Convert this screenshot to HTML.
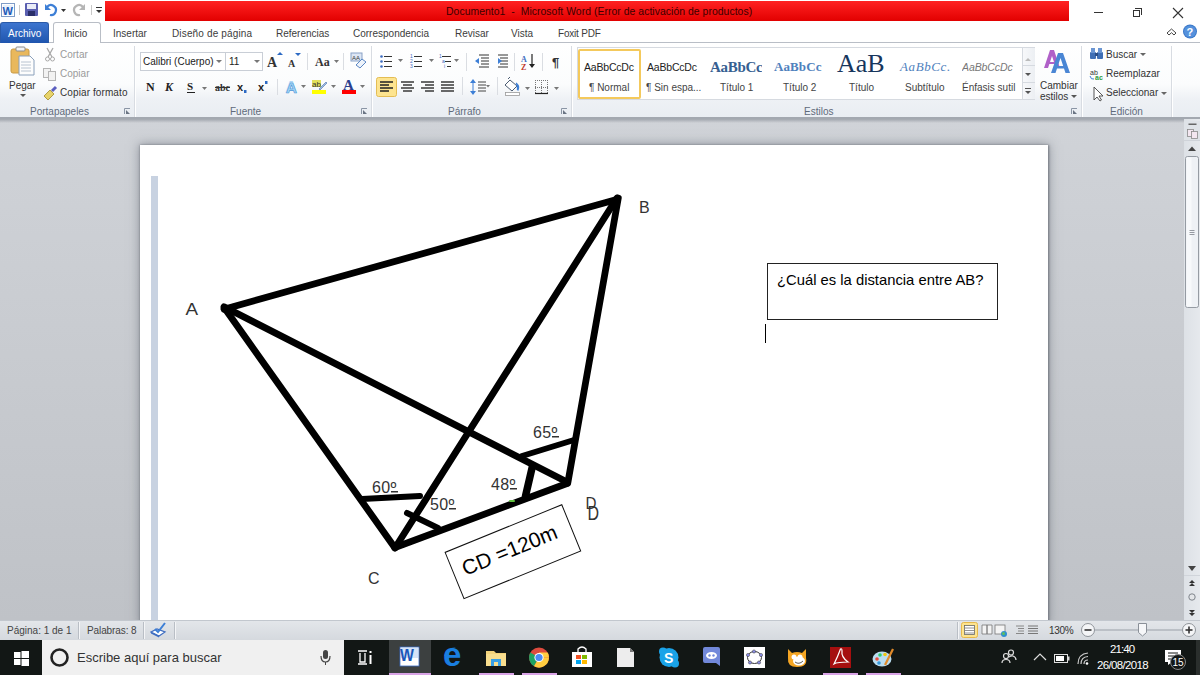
<!DOCTYPE html>
<html><head><meta charset="utf-8">
<style>
*{box-sizing:border-box}
html,body{margin:0;padding:0}
body{width:1200px;height:675px;position:relative;overflow:hidden;font-family:"Liberation Sans",sans-serif;background:#fff;color:#222}
.a{position:absolute}
.t{position:absolute;white-space:nowrap;font-size:11px;line-height:12px;color:#3b3b3b}
.tab{position:absolute;top:28px;font-size:11px;line-height:12px;color:#3c3c3c;white-space:nowrap}
.glab{position:absolute;top:106px;font-size:11px;line-height:12px;color:#5f6a7a;white-space:nowrap}
.sep{position:absolute;width:1px;background:#d5d9df}
.dd{position:absolute;width:0;height:0;border-left:3px solid transparent;border-right:3px solid transparent;border-top:3px solid #555}
.gsep{position:absolute;top:46px;height:72px;width:1px;background:#d8dce2;box-shadow:1px 0 0 #fff}
</style></head>
<body>
<!-- TITLE BAR -->
<div class="a" style="left:0;top:0;width:1200px;height:22px;background:#fff"></div>
<div class="a" style="left:105px;top:1px;width:964px;height:20px;background:linear-gradient(#ff2222,#e20000)"></div>
<div class="t" style="left:446px;top:6px;font-size:10.4px;color:#3a0000;letter-spacing:0.05px">Documento1&nbsp; -&nbsp; Microsoft Word (Error de activación de productos)</div>
<!-- window controls -->
<div class="a" style="left:1094px;top:12px;width:9px;height:1px;background:#333"></div>
<div class="a" style="left:1133px;top:10px;width:7px;height:7px;border:1px solid #333"></div>
<div class="a" style="left:1135px;top:8px;width:7px;height:7px;border-top:1px solid #333;border-right:1px solid #333"></div>
<svg class="a" style="left:1172px;top:7px" width="12" height="12"><path d="M1 1L11 11M11 1L1 11" stroke="#333" stroke-width="1.1"/></svg>


<!-- QAT -->
<svg class="a" style="left:0;top:0" width="105" height="22">
 <rect x="1.5" y="3.5" width="13" height="13" fill="#fff" stroke="#7f9cc7"/>
 <rect x="3" y="5" width="10" height="10" fill="#e8f0fb"/>
 <text x="2.5" y="14.5" font-family="Liberation Sans" font-weight="bold" font-size="11" fill="#1e5bb8">W</text>
 <line x1="19.5" y1="5" x2="19.5" y2="15" stroke="#c8c8c8"/>
 <rect x="25" y="3" width="13" height="13" rx="1" fill="#5a5fb0"/>
 <rect x="27" y="4" width="9" height="5" fill="#e9ecf7"/>
 <rect x="28" y="11" width="7" height="5" fill="#2a2f6a"/>
 <path d="M47 7 A5 5 0 1 1 50 15" fill="none" stroke="#3d7fd6" stroke-width="2.2"/>
 <path d="M45 4 L45 10 L51 10 Z" fill="#3d7fd6"/>
 <path d="M61 9 L66 9 L63.5 12 Z" fill="#333"/>
 <path d="M83 7 A5 5 0 1 0 80 15" fill="none" stroke="#b5b5b5" stroke-width="2.2"/>
 <path d="M85 4 L85 10 L79 10 Z" fill="#b5b5b5"/>
 <line x1="91.5" y1="5" x2="91.5" y2="15" stroke="#c8c8c8"/>
 <rect x="96" y="7" width="6" height="1" fill="#333"/>
 <path d="M96 10 L102 10 L99 13 Z" fill="#333"/>
</svg>
<!-- TABS -->
<div class="a" style="left:0;top:22px;width:1200px;height:21px;background:#fff;border-bottom:1px solid #b9bec6"></div>
<div class="a" style="left:0;top:22px;width:49px;height:21px;background:linear-gradient(#3d75cf,#1f55ae);border-radius:3px 3px 0 0;border:1px solid #2a5aa8;border-bottom:none"></div>
<div class="tab" style="left:8px;color:#fff;font-size:10px">Archivo</div>
<div class="a" style="left:53px;top:22px;width:48px;height:22px;background:#fff;border:1px solid #b9bec6;border-bottom:none;border-radius:3px 3px 0 0"></div>
<div class="tab" style="left:64px;font-size:10px">Inicio</div>
<div class="tab" style="left:113px;font-size:10px">Insertar</div>
<div class="tab" style="left:172px;font-size:10px;letter-spacing:0.15px">Diseño de página</div>
<div class="tab" style="left:276px;font-size:10px">Referencias</div>
<div class="tab" style="left:353px;font-size:10px">Correspondencia</div>
<div class="tab" style="left:455px;font-size:10px">Revisar</div>
<div class="tab" style="left:511px;font-size:10px">Vista</div>
<div class="tab" style="left:558px;font-size:10px;letter-spacing:-0.2px">Foxit PDF</div>
<svg class="a" style="left:1165px;top:24px" width="35" height="18">
 <path d="M2 9 L6.5 5 L11 9 L9 11 L6.5 8.7 L4 11 Z" fill="none" stroke="#444" stroke-width="1"/>
 <circle cx="25" cy="7.5" r="7" fill="#3b78c9"/>
 <circle cx="25" cy="7.5" r="6" fill="#5591dc"/>
 <text x="21.5" y="11.8" font-family="Liberation Sans" font-weight="bold" font-size="11" fill="#fff">?</text>
</svg>
<!-- RIBBON BODY -->
<div class="a" style="left:0;top:43px;width:1200px;height:75px;background:linear-gradient(#ffffff 0%,#fbfcfd 55%,#eef1f5 75%,#e9edf2 100%)"></div>
<div class="gsep" style="left:134px"></div>
<div class="gsep" style="left:371px"></div>
<div class="gsep" style="left:571px"></div>
<div class="gsep" style="left:1081px"></div>
<div class="gsep" style="left:1171px"></div>
<div class="glab" style="left:30px;font-size:10px">Portapapeles</div>
<div class="glab" style="left:230px;font-size:10px">Fuente</div>
<div class="glab" style="left:448px;font-size:10px">Párrafo</div>
<div class="glab" style="left:804px;font-size:10px">Estilos</div>
<div class="glab" style="left:1110px;font-size:10px">Edición</div>
<svg class="a" style="left:0;top:105px" width="1200" height="12">
 <g fill="none" stroke="#8a95a5" stroke-width="1">
 <path d="M124.5 9V3.5H130"/><path d="M361.5 9V3.5H367"/><path d="M561.5 9V3.5H567"/><path d="M1071.5 9V3.5H1077"/>
 </g>
 <g fill="#6b7584"><path d="M126 5L130 9H126Z"/><path d="M363 5L367 9H363Z"/><path d="M563 5L567 9H563Z"/><path d="M1073 5L1077 9H1073Z"/></g>
</svg>
<!-- Portapapeles -->
<svg class="a" style="left:0;top:43px" width="134" height="62">
 <rect x="11" y="6" width="18" height="24" rx="2" fill="#e9b85c" stroke="#c99a45"/>
 <rect x="16" y="4" width="9" height="4" rx="1" fill="#f4f4f4" stroke="#8c8c8c"/>
 <path d="M19 13 H30 L34 17 V32 H19 Z" fill="#fdfdfd" stroke="#8aa0bb"/>
 <path d="M21 19H31M21 22H31M21 25H31M21 28H31" stroke="#b8c3d0"/>
 <path d="M47 5 L52 14 M53 5 L48 14" stroke="#a9a9a9" stroke-width="1.3"/>
 <circle cx="47.5" cy="16" r="2" fill="none" stroke="#a9a9a9"/><circle cx="52.5" cy="16" r="2" fill="none" stroke="#a9a9a9"/>
 <rect x="43.5" y="25.5" width="7" height="9" fill="#f2f2f2" stroke="#b5b5b5"/>
 <rect x="48.5" y="28.5" width="7" height="9" fill="#f2f2f2" stroke="#b5b5b5"/>
 <path d="M44 53 L50 47 L54 51 L48 57 Z" fill="#e7d36a" stroke="#a08a2a" stroke-width="0.8"/>
 <path d="M52 48 L56 44" stroke="#5b5ec0" stroke-width="3"/>
 <path d="M20 51 L26 51 L23 54 Z" fill="#555"/>
</svg>
<div class="t" style="left:9px;top:80px;font-size:10px;color:#333">Pegar</div>
<div class="t" style="left:60px;top:49px;font-size:10px;color:#9a9a9a">Cortar</div>
<div class="t" style="left:60px;top:68px;font-size:10px;color:#9a9a9a">Copiar</div>
<div class="t" style="left:60px;top:87px;font-size:10px;color:#333;letter-spacing:0.1px">Copiar formato</div>
<!-- Fuente -->
<div class="a" style="left:140px;top:52px;width:86px;height:19px;background:#fff;border:1px solid #c9ced6"></div>
<div class="a" style="left:225px;top:52px;width:38px;height:19px;background:#fff;border:1px solid #c9ced6"></div>
<div class="t" style="left:143px;top:56px;font-size:10px;color:#222">Calibri (Cuerpo)</div>
<div class="t" style="left:229px;top:56px;font-size:10px;color:#222">11</div>
<div class="dd" style="left:216px;top:60px;border-top-color:#777"></div>
<div class="dd" style="left:254px;top:60px;border-top-color:#777"></div>
<svg class="a" style="left:264px;top:50px" width="108" height="50">
 <text x="3" y="17" font-family="Liberation Serif" font-weight="bold" font-size="14" fill="#333">A</text>
 <path d="M13 5 L16 2 L19 5Z" fill="#2d6ac4"/>
 <text x="24" y="17" font-family="Liberation Serif" font-weight="bold" font-size="10" fill="#333">A</text>
 <path d="M31 3 L34 6 L37 3Z" fill="#2d6ac4"/>
 <line x1="43.5" y1="3" x2="43.5" y2="20" stroke="#dadde2"/>
 <text x="51" y="16" font-family="Liberation Serif" font-weight="bold" font-size="12" fill="#333">Aa</text>
 <path d="M70 10 L75 10 L72.5 13Z" fill="#777"/>
 <line x1="79.5" y1="3" x2="79.5" y2="20" stroke="#dadde2"/>
 <rect x="87" y="3" width="11" height="8" fill="#dde6f4" stroke="#8aa2c6"/>
 <text x="88" y="10" font-family="Liberation Sans" font-size="6" fill="#333">AA</text>
 <path d="M92 15 L98 9 L102 12 L96 18 Z" fill="#eef3fa" stroke="#5b86c4"/>
 <!-- row 2 -->
  <line x1="13.5" y1="29" x2="13.5" y2="45" stroke="#dadde2"/>
 <text x="21" y="43" font-family="Liberation Sans" font-weight="bold" font-size="17" fill="#8fc8f2" opacity="0.7">A</text>
 <text x="22" y="43" font-family="Liberation Sans" font-weight="bold" font-size="15" fill="#a8d6f6" stroke="#4b96d8" stroke-width="0.6">A</text>
 <path d="M37 35 L42 35 L39.5 38Z" fill="#777"/>
 <rect x="48" y="30" width="9" height="7" fill="#e2e05a"/>
 <text x="48" y="37" font-family="Liberation Sans" font-size="8" fill="#333">ab</text>
 <path d="M55 39 L62 32 L63 33 L56 40Z" fill="#9fbde6" stroke="#4a6fa8" stroke-width="0.6"/>
 <rect x="48" y="40" width="14" height="4" fill="#ffff00"/>
 <path d="M67 35 L72 35 L69.5 38Z" fill="#777"/>
 <text x="79" y="40" font-family="Liberation Serif" font-weight="bold" font-size="15" fill="#2a3f8f">A</text>
 <rect x="78" y="40" width="14" height="4" fill="#ff0000"/>
 <path d="M96 35 L101 35 L98.5 38Z" fill="#777"/>
</svg>
<svg class="a" style="left:140px;top:78px" width="132" height="22">
 <text x="6" y="13" font-family="Liberation Serif" font-weight="bold" font-size="12" fill="#222">N</text>
 <text x="25" y="13" font-family="Liberation Serif" font-weight="bold" font-style="italic" font-size="12" fill="#222">K</text>
 <text x="47" y="12" font-family="Liberation Serif" font-weight="bold" font-size="11" fill="#222">S</text>
 <rect x="47" y="14" width="8" height="1" fill="#222"/>
 <path d="M62 9 L67 9 L64.5 12Z" fill="#777"/>
 <text x="75" y="13" font-family="Liberation Serif" font-weight="bold" font-size="10" fill="#333">abc</text>
 <rect x="75" y="9" width="15" height="1" fill="#333"/>
 <text x="97" y="13" font-family="Liberation Sans" font-weight="bold" font-size="11" fill="#222">x</text>
 <rect x="104" y="12" width="2.5" height="3" fill="#2d6ac4"/>
 <text x="118" y="13" font-family="Liberation Sans" font-weight="bold" font-size="11" fill="#222">x</text>
 <rect x="125" y="3" width="2.5" height="3" fill="#2d6ac4"/>
</svg>
<!-- Parrafo -->
<svg class="a" style="left:371px;top:43px" width="200" height="62">
 <g fill="#3d6cc0"><circle cx="10.5" cy="13.5" r="1.3"/><circle cx="10.5" cy="18.5" r="1.3"/><circle cx="10.5" cy="23.5" r="1.3"/></g>
 <g stroke="#333" stroke-width="1.2"><path d="M13 13.5H21M13 18.5H21M13 23.5H21"/></g>
 <path d="M27 16 L32 16 L29.5 19Z" fill="#777"/>
 <g fill="#3d6cc0" font-family="Liberation Sans" font-size="5"><text x="39" y="15">1</text><text x="39" y="20">2</text><text x="39" y="25">3</text></g>
 <g stroke="#333" stroke-width="1.2"><path d="M43 13.5H51M43 18.5H51M43 23.5H51"/></g>
 <path d="M58 16 L63 16 L60.5 19Z" fill="#777"/>
 <g fill="#3d6cc0" font-family="Liberation Sans" font-size="5"><text x="68" y="15">1</text><text x="71" y="20">a</text><text x="73" y="25">i</text></g>
 <g stroke="#333"><path d="M71 13.5H80M74 18.5H80M76 23.5H80"/></g>
 <path d="M83 16 L88 16 L85.5 19Z" fill="#777"/>
 <line x1="95.5" y1="10" x2="95.5" y2="28" stroke="#dadde2"/>
 <g stroke="#333"><path d="M108 12H118M110 15H118M110 18H118M110 21H118M108 24H118"/></g>
 <path d="M104 18 L108 15 L108 21Z" fill="#3d7fd6"/>
 <g stroke="#333"><path d="M127 12H137M129 15H137M129 18H137M129 21H137M127 24H137"/></g>
 <path d="M127 15 L131 18 L127 21Z" fill="#3d7fd6"/>
 <line x1="143.5" y1="10" x2="143.5" y2="28" stroke="#dadde2"/>
 <text x="150" y="19" font-family="Liberation Serif" font-weight="bold" font-size="8" fill="#3d6cc0">A</text>
 <text x="150" y="27" font-family="Liberation Serif" font-weight="bold" font-size="8" fill="#c0392b">Z</text>
 <path d="M161 11V24" stroke="#222" stroke-width="1.2"/><path d="M158 21L161 25L164 21Z" fill="#222"/>
 <line x1="171.5" y1="10" x2="171.5" y2="28" stroke="#dadde2"/>
 <text x="181" y="24" font-family="Liberation Sans" font-weight="bold" font-size="13" fill="#333">¶</text>
 <!-- row2 -->
 <rect x="5.5" y="34.5" width="20" height="19" rx="2" fill="#fde48f" stroke="#e4bd54"/>
 <g stroke="#222" stroke-width="1.5"><path d="M9 39H22M9 42H18M9 45H22M9 48H18"/></g>
 <g stroke="#3a3a3a" stroke-width="1.5"><path d="M30 39H43M32 42H41M30 45H43M32 48H41"/></g>
 <g stroke="#3a3a3a" stroke-width="1.5"><path d="M50 39H63M54 42H63M50 45H63M54 48H63"/></g>
 <g stroke="#3a3a3a" stroke-width="1.5"><path d="M70 39H83M70 42H83M70 45H83M70 48H83"/></g>
 <line x1="91.5" y1="34" x2="91.5" y2="52" stroke="#dadde2"/>
 <path d="M102 36L99 40H105ZM102 52L99 48H105Z" fill="#3d7fd6"/><path d="M102 40V48" stroke="#3d7fd6"/>
 <g stroke="#444" stroke-width="1.2"><path d="M107 39H115M107 42H115M107 45H115M107 48H115"/></g>
 <path d="M115 42 L119 42 L117 44.5Z" fill="#777"/>
 <line x1="126.5" y1="34" x2="126.5" y2="52" stroke="#dadde2"/>
 <path d="M139 37 L146 43 L141 48 L134 42 Z" fill="#fff" stroke="#4a5a70" stroke-width="1"/>
 <path d="M137 36 L139 34" stroke="#4a5a70"/>
 <path d="M145 40 Q149 43 147 47 L146 46" fill="#3d7fd6" stroke="#3d7fd6" stroke-width="1.2"/>
 <rect x="134.5" y="49.5" width="14" height="3" fill="#fff" stroke="#999" stroke-width="0.8"/>
 <path d="M154 44 L159 44 L156.5 47Z" fill="#777"/>
 <g stroke="#777" stroke-width="1" stroke-dasharray="1,1"><path d="M164.5 37V51M170.5 37V51M176.5 37V51M164 37.5H177M164 44.5H177"/></g>
 <path d="M164 50.5H177" stroke="#222" stroke-width="1.2"/>
 <path d="M183 44 L188 44 L185.5 47Z" fill="#777"/>
</svg>
<!-- Estilos -->
<div class="a" style="left:577px;top:47px;width:458px;height:53px;background:#fff;border:1px solid #d6dae0"></div>
<div class="a" style="left:578px;top:49px;width:63px;height:50px;background:#fff;border:2px solid #f4c95c;border-radius:2px"></div>
<div class="t" style="left:584px;top:61px;font-size:10.5px;color:#222;letter-spacing:-0.2px">AaBbCcDc</div>
<div class="t" style="left:589px;top:82px;font-size:10px;color:#444">¶ Normal</div>
<div class="t" style="left:647px;top:61px;font-size:10.5px;color:#222;letter-spacing:-0.2px">AaBbCcDc</div>
<div class="t" style="left:646px;top:82px;font-size:10px;color:#444">¶ Sin espa...</div>
<div class="t" style="left:710px;top:59px;font-family:'Liberation Serif';font-weight:bold;font-size:15px;line-height:16px;color:#365f91;letter-spacing:-0.3px;width:52px;overflow:hidden">AaBbCc</div>
<div class="t" style="left:720px;top:82px;font-size:10px;color:#444">Título 1</div>
<div class="t" style="left:774px;top:60px;font-family:'Liberation Serif';font-weight:bold;font-size:13px;line-height:14px;color:#4f81bd;letter-spacing:0.1px">AaBbCc</div>
<div class="t" style="left:783px;top:82px;font-size:10px;color:#444">Título 2</div>
<div class="t" style="left:837px;top:51px;font-family:'Liberation Serif';font-size:26px;line-height:26px;color:#17365d">AaB</div>
<div class="t" style="left:849px;top:82px;font-size:10px;color:#444">Título</div>
<div class="t" style="left:900px;top:60px;font-family:'Liberation Serif';font-style:italic;font-size:13px;line-height:14px;color:#4f81bd;letter-spacing:0.6px">AaBbCc.</div>
<div class="t" style="left:905px;top:82px;font-size:10px;color:#444">Subtítulo</div>
<div class="t" style="left:962px;top:61px;font-style:italic;font-size:10.5px;color:#777;letter-spacing:-0.1px;width:53px;overflow:hidden">AaBbCcDc</div>
<div class="t" style="left:962px;top:82px;font-size:10px;color:#444">Énfasis sutil</div>
<div class="a" style="left:1022px;top:48px;width:13px;height:51px;background:linear-gradient(90deg,#f7f8fa,#eceff3);border-left:1px solid #d6dae0"></div>
<div class="a" style="left:1022px;top:65px;width:13px;height:1px;background:#d6dae0"></div>
<div class="a" style="left:1022px;top:82px;width:13px;height:1px;background:#d6dae0"></div>
<div class="dd" style="left:1025px;top:58px;border-top:none;border-bottom:3px solid #bbb"></div>
<div class="dd" style="left:1025px;top:73px;border-top-color:#555"></div>
<div class="a" style="left:1025px;top:88px;width:6px;height:1px;background:#555"></div>
<div class="dd" style="left:1025px;top:91px;border-top-color:#555"></div>
<svg class="a" style="left:1040px;top:47px" width="40" height="30">
 <path d="M4 21 L10 3 L14 3 L20 21 L16 21 L12 9 L8 21Z M8 15H16V17H8Z" fill="#b060c8"/>
 <path d="M11 26 L18 6 L23 6 L30 26 L25.5 26 L20.5 11 L15.5 26Z M15 19H25V21.5H15Z" fill="#4a86d4"/>
</svg>
<div class="t" style="left:1040px;top:80px;font-size:10px;color:#333">Cambiar</div>
<div class="t" style="left:1040px;top:91px;font-size:10px;color:#333">estilos</div>
<div class="dd" style="left:1071px;top:95px;border-top-color:#555"></div>
<!-- Edicion -->
<svg class="a" style="left:1086px;top:45px" width="22" height="58">
 <rect x="4" y="7" width="6" height="7" rx="1" fill="#3f6fb5"/><rect x="11" y="7" width="6" height="7" rx="1" fill="#3f6fb5"/>
 <rect x="5" y="3" width="4" height="5" fill="#6a95d2"/><rect x="12" y="3" width="4" height="5" fill="#6a95d2"/>
 <rect x="9" y="8" width="3" height="3" fill="#2b4e86"/>
 <text x="4" y="30" font-family="Liberation Sans" font-size="7" fill="#333">ab</text>
 <text x="9" y="35" font-family="Liberation Sans" font-weight="bold" font-size="7" fill="#2e9a3e">ac</text>
 <path d="M4 31 Q5 35 8 34" fill="none" stroke="#3d7fd6"/>
 <path d="M8 42 L8 55 L11 52 L14 56 L15.5 55 L13 51 L17 51 Z" fill="#fff" stroke="#444" stroke-width="0.9"/>
</svg>
<div class="t" style="left:1106px;top:49px;font-size:10px;color:#333">Buscar</div>
<div class="dd" style="left:1140px;top:53px;border-top-color:#666"></div>
<div class="t" style="left:1106px;top:68px;font-size:10px;color:#333">Reemplazar</div>
<div class="t" style="left:1106px;top:87px;font-size:10px;color:#333">Seleccionar</div>
<div class="dd" style="left:1161px;top:92px;border-top-color:#666"></div>

<!-- DOC AREA BG -->
<div class="a" style="left:0;top:118px;width:1200px;height:502px;background:linear-gradient(#d0d3d8,#bfc2c7)"></div>
<div class="a" style="left:0;top:117px;width:1200px;height:2px;background:#a3a8b0"></div>
<div class="a" style="left:0;top:119px;width:1200px;height:4px;background:linear-gradient(rgba(150,155,163,0.8),rgba(200,203,208,0))"></div>

<!-- PAGE -->
<div class="a" style="left:140px;top:145px;width:908px;height:480px;background:#fff;box-shadow:0 0 2px 0.5px rgba(90,95,105,0.7),0 0 10px 1px rgba(90,95,105,0.5)"></div>
<div class="a" style="left:151px;top:176px;width:7px;height:450px;background:#c8d2e1"></div>

<!-- SCROLLBAR -->
<div class="a" style="left:1184px;top:119px;width:16px;height:501px;background:linear-gradient(90deg,#dde1e6,#e6e9ed)"></div>
<div class="a" style="left:1184px;top:121px;width:16px;height:20px;background:#dfe3e8;border-bottom:1px solid #cfd3d9"></div>
<svg class="a" style="left:1184px;top:119px" width="16" height="501">
 <rect x="4.5" y="4.5" width="8" height="1.5" fill="#666"/>
 <rect x="3.5" y="10.5" width="6" height="7" fill="#f3e6f0" stroke="#8a8a8a" stroke-width="0.8"/>
 <rect x="7.5" y="12.5" width="6" height="7" fill="#f3e6f0" stroke="#8a8a8a" stroke-width="0.8"/>
 <path d="M4 32 L8 27.5 L12 32Z" fill="#444"/>
 <rect x="1.5" y="37.5" width="13" height="151" rx="2" fill="#eef1f5" stroke="#959ba3"/>
 <rect x="2.5" y="38.5" width="5" height="149" fill="#f7f9fb"/>
 <path d="M5 35.5 M5.5 111.5H10.5M5.5 113.5H10.5M5.5 115.5H10.5" stroke="#7d838b" stroke-width="0.8"/>
 <path d="M4 447 L8 452 L12 447Z" fill="#444"/>
 <rect x="0" y="456" width="16" height="1" fill="#d0d4da"/>
 <path d="M5 464L8 461L11 464ZM5 467L8 464L11 467Z M7.5 467V468" fill="#333"/>
 <circle cx="8" cy="478" r="3.2" fill="#e4e6e9" stroke="#7f858c"/>
 <path d="M5 491L8 494L11 491ZM5 494L8 497L11 494Z" fill="#333"/>
</svg>

<!-- STATUS BAR -->
<div class="a" style="left:0;top:620px;width:1200px;height:20px;background:linear-gradient(#e3e6ea,#d5d9de);border-top:1px solid #c2c7ce"></div>
<div class="t" style="left:7px;top:625px;font-size:10px;color:#444">Página: 1 de 1</div>
<div class="t" style="left:87px;top:625px;font-size:10px;color:#444;letter-spacing:-0.1px">Palabras: 8</div>
<div class="a" style="left:78px;top:622px;width:1px;height:17px;background:#b9bec5;box-shadow:1px 0 0 #f4f5f7"></div>
<div class="a" style="left:143px;top:622px;width:1px;height:17px;background:#b9bec5;box-shadow:1px 0 0 #f4f5f7"></div>
<div class="a" style="left:174px;top:622px;width:1px;height:17px;background:#b9bec5;box-shadow:1px 0 0 #f4f5f7"></div>
<div class="a" style="left:957px;top:622px;width:1px;height:17px;background:#b9bec5;box-shadow:1px 0 0 #f4f5f7"></div>
<svg class="a" style="left:150px;top:621px" width="18" height="18">
 <path d="M1 11 L7 8 L15 11 L9 15Z" fill="#fff" stroke="#3d6cc0" stroke-width="1.2"/>
 <path d="M1 11 L9 15 L9 16.5 L1 12.5Z" fill="#3d6cc0"/>
 <path d="M5 8 L8 11 L15 2" fill="none" stroke="#3d7fd6" stroke-width="2"/>
</svg>
<svg class="a" style="left:958px;top:620px" width="242" height="20">
 <rect x="3.5" y="2.5" width="16" height="15" rx="2" fill="#fde48f" stroke="#e6b84a"/>
 <rect x="6.5" y="5.5" width="10" height="9" fill="#fff" stroke="#666" stroke-width="0.8"/>
 <path d="M7 8H16M7 10.5H16M7 13H16" stroke="#777" stroke-width="0.8"/>
 <path d="M24 5H29V14H24ZM29 5H34V14H29Z" fill="#f4f4f4" stroke="#777" stroke-width="0.8"/>
 <rect x="37" y="5" width="10" height="9" fill="#f4f4f4" stroke="#777" stroke-width="0.8"/>
 <circle cx="46" cy="14" r="3" fill="#2f8fd0"/><circle cx="45.5" cy="13.5" r="1.5" fill="#5fbf5f"/>
 <path d="M58 6H66M60 8.5H66M60 11H66M58 13.5H66" stroke="#888" stroke-width="1"/>
 <path d="M70 6H80M70 8.5H80M70 11H80M70 13.5H80" stroke="#777" stroke-width="1.2"/>
 <text x="91" y="14" font-family="Liberation Sans" font-size="10" letter-spacing="-0.3" fill="#333">130%</text>
 <circle cx="130" cy="10" r="6.5" fill="#f4f5f7" stroke="#8f949a"/>
 <rect x="126.5" y="9.2" width="7" height="1.6" fill="#333"/>
 <rect x="137" y="9.5" width="87" height="1" fill="#9aa0a7"/>
 <path d="M180.5 3.5H188.5V12.5L184.5 16L180.5 12.5Z" fill="#f6f7f9" stroke="#8a9098"/>
 <circle cx="231" cy="10" r="6.5" fill="#f4f5f7" stroke="#8f949a"/>
 <rect x="227.5" y="9.2" width="7" height="1.6" fill="#333"/><rect x="230.2" y="6.5" width="1.6" height="7" fill="#333"/>
</svg>

<!-- TASKBAR -->
<div class="a" style="left:0;top:640px;width:1200px;height:35px;background:#121715"></div>
<div class="a" style="left:42px;top:640px;width:302px;height:35px;background:#f0f0f0"></div>
<div class="t" style="left:77px;top:650px;font-size:13px;line-height:15px;color:#333">Escribe aquí para buscar</div>
<svg class="a" style="left:0;top:640px" width="1200" height="35">
 <g fill="#fff"><rect x="14" y="12" width="6.5" height="6"/><rect x="21.5" y="11" width="7.5" height="7"/><rect x="14" y="19" width="6.5" height="6"/><rect x="21.5" y="19" width="7.5" height="7"/></g>
 <circle cx="59.5" cy="17.5" r="8" fill="none" stroke="#222" stroke-width="2.6"/>
 <rect x="323" y="10" width="5" height="9" rx="2.5" fill="#444"/>
 <path d="M321 16 Q321 22 325.5 22 Q330 22 330 16" fill="none" stroke="#444" stroke-width="1.2"/>
 <rect x="325" y="22" width="1" height="3" fill="#444"/>
 <g fill="none" stroke="#fff" stroke-width="1.3"><path d="M358 11H367M358 24H367M360 13V22H365V13"/></g>
 <rect x="369.5" y="11" width="2" height="2" fill="#fff"/><rect x="369.5" y="15" width="2" height="9" fill="#fff"/>
 <rect x="389" y="0" width="42" height="35" fill="#3c4040"/>
 <rect x="389" y="33" width="42" height="2" fill="#d9a3e6"/>
 <rect x="479" y="33" width="35" height="2" fill="#d9a3e6"/>
 <rect x="522" y="33" width="35" height="2" fill="#d9a3e6"/>
 <rect x="823" y="33" width="35" height="2" fill="#d9a3e6"/>
 <rect x="866" y="33" width="35" height="2" fill="#d9a3e6"/>
 <!-- word -->
 <rect x="400" y="7" width="19" height="19" fill="#fff" stroke="#3a6cc4" stroke-width="0.8"/>
 <rect x="401" y="8" width="17" height="10" fill="#d5e3f7"/>
 <text x="400" y="21" font-family="Liberation Sans" font-weight="bold" font-size="14" fill="#1a56b8" transform="translate(400,21) scale(1.05,1.15) translate(-400,-21)">W</text>
 <!-- edge -->
 <text x="443" y="666" font-family="Liberation Sans" font-weight="bold" font-size="33" fill="#1a7fe0" transform="translate(0,-640)">e</text>
 <path d="M444 16 Q447 7 456 7.5 Q450 8.5 447 15Z" fill="#1a7fe0"/>
 <!-- explorer -->
 <path d="M486 11 H494 L496 13 H506 V26 H486 Z" fill="#f3d37a"/>
 <rect x="486" y="14" width="20" height="12" fill="#f8de8e"/>
 <path d="M491 26 V19 H501 V26 H498 V22 H494 V26Z" fill="#37a0e6"/>
 <!-- chrome -->
 <circle cx="539" cy="17.5" r="10" fill="#dd4b3e"/>
 <path d="M539 17.5 L530.3 12.5 A10 10 0 0 0 534 26.2Z" fill="#1ea362"/>
 <path d="M539 17.5 L534 26.2 A10 10 0 0 0 549 17.5 Z" fill="#ffcd40"/>
 <path d="M539 17.5 L549 17.5 A10 10 0 0 0 547.7 12.5 L539 12.5Z" fill="#ffcd40"/>
 <circle cx="539" cy="17.5" r="4.6" fill="#fff"/><circle cx="539" cy="17.5" r="3.6" fill="#4a8af4"/>
 <!-- store -->
 <rect x="572" y="12" width="20" height="15" fill="#fff"/>
 <path d="M578 12 V9 Q582 5 586 9 V12" fill="none" stroke="#fff" stroke-width="1.3"/>
 <rect x="576" y="15" width="5" height="4" fill="#f25022"/><rect x="582" y="15" width="5" height="4" fill="#7fba00"/>
 <rect x="576" y="20" width="5" height="4" fill="#00a4ef"/><rect x="582" y="20" width="5" height="4" fill="#ffb900"/>
 <!-- libreoffice -->
 <path d="M617 8 H630 L634 12 V27 H617 Z" fill="#ededed"/>
 <path d="M630 8 L634 12 H630Z" fill="#777"/>
 <!-- skype -->
 <circle cx="669" cy="17.5" r="9.5" fill="#1aa3e8"/>
 <circle cx="663" cy="11.5" r="4" fill="#1aa3e8"/><circle cx="675" cy="23.5" r="4" fill="#1aa3e8"/>
 <text x="664" y="23" font-family="Liberation Sans" font-weight="bold" font-size="14" fill="#fff">S</text>
 <!-- discord -->
 <path d="M703 9 Q703 7 705 7 H718 Q720 7 720 9 V26 L716 23 H705 Q703 23 703 21Z" fill="#7289da"/>
 <ellipse cx="711.5" cy="15.5" rx="5.5" ry="3.5" fill="#fff"/>
 <circle cx="709.5" cy="15.5" r="1.2" fill="#7289da"/><circle cx="713.5" cy="15.5" r="1.2" fill="#7289da"/>
 <!-- geogebra -->
 <rect x="744" y="7" width="21" height="21" fill="#fff"/>
 <ellipse cx="754.5" cy="17.5" rx="7" ry="6" fill="none" stroke="#333" stroke-width="1"/>
 <g fill="#8c8fe6" stroke="#333" stroke-width="0.5"><circle cx="754" cy="11.5" r="1.6"/><circle cx="761" cy="15" r="1.6"/><circle cx="759" cy="22.5" r="1.6"/><circle cx="750" cy="22.5" r="1.6"/><circle cx="748" cy="15" r="1.6"/></g>
 <!-- scratch -->
 <path d="M788 9 L792 13 Q797 11 802 13 L806 9 L806 18 Q808 27 797 27 Q787 27 788 18Z" fill="#f5a623"/>
 <ellipse cx="799" cy="21" rx="6" ry="4.5" fill="#fff"/>
 <circle cx="794" cy="17" r="2.5" fill="#fff"/><circle cx="800" cy="17" r="2.5" fill="#fff"/>
 <path d="M795 22 Q799 25 803 21" fill="none" stroke="#333" stroke-width="0.8"/>
 <!-- acrobat -->
 <rect x="830" y="7" width="21" height="21" fill="#a50f0f"/>
 <path d="M834 24 Q838 16 840.5 9 Q842 8 842 11 Q841 17 848 22 Q844 22 836 23 Z" fill="none" stroke="#fff" stroke-width="1.2"/>
 <!-- paint -->
 <ellipse cx="882" cy="19" rx="9.5" ry="7.5" fill="#b9dcf0"/>
 <circle cx="877" cy="19" r="1.8" fill="#e74c3c"/><circle cx="880" cy="15" r="1.8" fill="#2ecc71"/><circle cx="885" cy="14.5" r="1.8" fill="#f1c40f"/><circle cx="879" cy="23" r="1.8" fill="#3498db"/>
 <path d="M885 25 L893 9" stroke="#e08a2a" stroke-width="2.2"/>
 <!-- tray -->
 <g fill="none" stroke="#ddd" stroke-width="1.2">
 <circle cx="1006" cy="16" r="2.5"/><path d="M1002 23 Q1002 19.5 1006 19.5 Q1010 19.5 1010 23"/>
 <circle cx="1011" cy="12.5" r="2.5"/><path d="M1009 17 Q1011 15.5 1013 16 Q1016 17 1016 20"/>
 <path d="M1034 20 L1040 14 L1046 20"/>
 </g>
 <rect x="1054.5" y="14.5" width="13" height="8" fill="none" stroke="#ddd"/>
 <rect x="1056" y="16" width="8" height="5" fill="#fff"/><rect x="1068" y="16.5" width="1.5" height="4" fill="#ddd"/>
 <g fill="none" stroke="#ccc" stroke-width="1.2"><path d="M1078 24 Q1078 14 1088 13"/><path d="M1081 24 Q1081 17 1088 16.5"/><path d="M1084 24 Q1084 20 1088 20"/></g>
 <circle cx="1087" cy="23.5" r="1.3" fill="#fff"/>
 <path d="M1165 10 H1181 V22 H1172 L1168 25 V22 H1165Z" fill="#fff"/>
 <path d="M1168 13H1178M1168 16H1178M1168 19H1175" stroke="#121715" stroke-width="1"/>
 <circle cx="1178" cy="22" r="7.5" fill="#121715" stroke="#888" stroke-width="1"/>
 <text x="1172.5" y="26" font-family="Liberation Sans" font-size="10" fill="#fff">15</text>
 <rect x="1196" y="0" width="4" height="35" fill="#2a2f2d"/>
</svg>
<div class="t" style="left:1110px;top:643px;font-size:11.5px;line-height:13px;color:#fff;letter-spacing:-0.9px">21:40</div>
<div class="t" style="left:1097px;top:659px;font-size:11.5px;line-height:13px;color:#fff;letter-spacing:-0.65px">26/08/2018</div>

<!-- DRAWING -->
<svg class="a" style="left:0;top:0" width="1200" height="675">
<g fill="none" stroke="#000" stroke-width="6.8" stroke-linecap="round">
<line x1="224" y1="309.2" x2="617.5" y2="199.2"/>
<line x1="224.5" y1="308" x2="395" y2="548"/>
<line x1="224" y1="306.8" x2="567" y2="482"/>
<line x1="617" y1="198" x2="395" y2="548"/>
<line x1="618.3" y1="198" x2="567.8" y2="483"/>
<line x1="395" y1="547.5" x2="567" y2="483.5"/>
</g>
<g fill="none" stroke="#000" stroke-width="6" stroke-linecap="round">
<line x1="362" y1="499" x2="420" y2="496"/>
<line x1="407" y1="513" x2="438" y2="528"/>
<line x1="522" y1="456" x2="574" y2="440"/>
<line x1="532.5" y1="466" x2="525.5" y2="496" stroke-width="7.5"/>
</g>
<g transform="translate(512.9,551.7) rotate(-22.2)">
<rect x="-63" y="-25" width="126" height="50" fill="#fff" stroke="#111" stroke-width="1"/>
<text x="-2.5" y="4.5" text-anchor="middle" font-family="Liberation Sans" font-size="21" fill="#000">CD =120m</text>
</g>
<g font-family="Liberation Sans" fill="#333">
<text x="185.5" y="315" font-size="16" transform="translate(185.5,315) scale(1.18,1) translate(-185.5,-315)">A</text>
<text x="639" y="213" font-size="16">B</text>
<text x="368" y="584" font-size="16">C</text>
<text x="585.5" y="509" font-size="16" transform="translate(585.5,509) scale(0.95,1) translate(-585.5,-509)">D</text>
<text x="587.5" y="520" font-size="20" transform="translate(587.5,520) scale(0.8,1) translate(-587.5,-520)">D</text>
</g>
<g font-family="Liberation Sans" fill="#333" font-size="16" letter-spacing="0.3">
<text x="372" y="493">60º</text>
<text x="430" y="510">50º</text>
<text x="491" y="490">48º</text>
<text x="533" y="438">65º</text>
</g>
<g fill="#333">
<rect x="391" y="491" width="7" height="1.5"/>
<rect x="449" y="508" width="7" height="1.5"/>
<rect x="510" y="488" width="7" height="1.5"/>
<rect x="552" y="436" width="7" height="1.5"/>
</g>
<rect x="509" y="500" width="6" height="2" rx="1" fill="#5fbf3f"/>
</svg>

<!-- QUESTION BOX -->
<div class="a" style="left:767px;top:263px;width:231px;height:57px;border:1px solid #222;background:#fff"></div>
<div class="t" style="left:777px;top:272px;font-size:14.8px;line-height:16px;color:#000">¿Cuál es la distancia entre AB?</div>
<div class="a" style="left:764.5px;top:324px;width:1.6px;height:19px;background:#000"></div>

</body></html>
